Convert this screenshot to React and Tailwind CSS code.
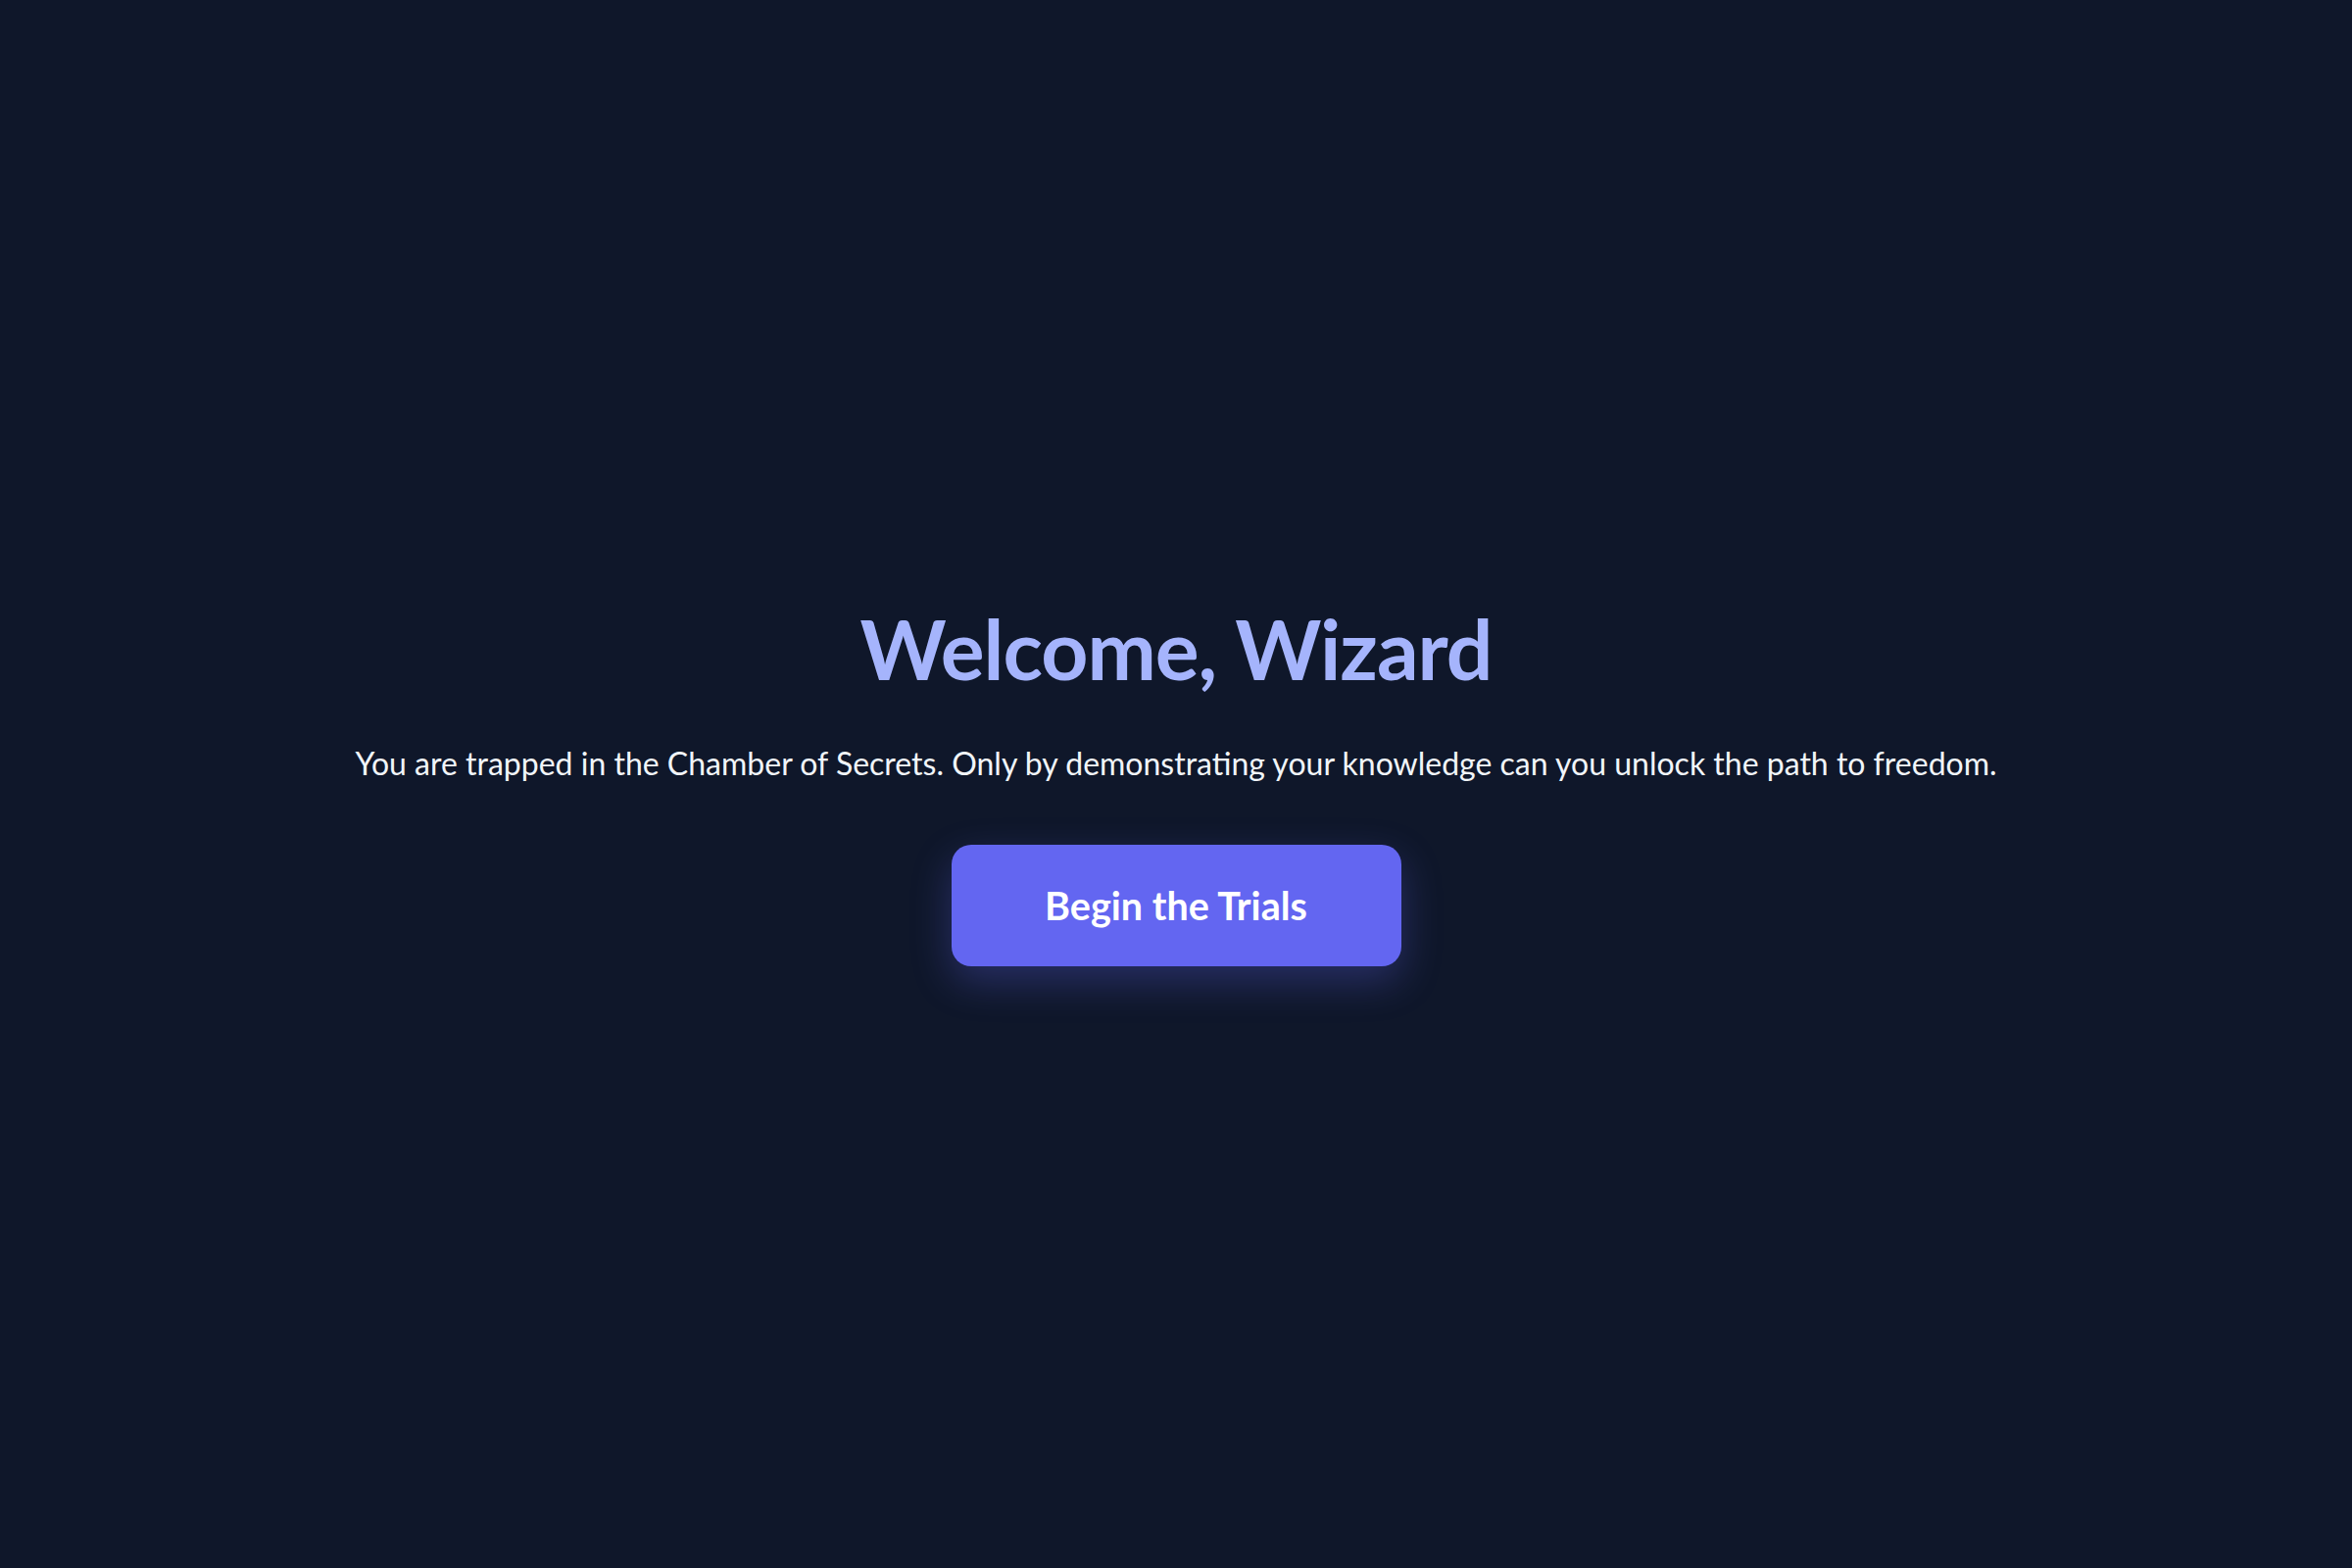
import React from 'react';

const App = () => {
  return (
    <div className="min-h-screen pt-[6px] bg-[#0f172a] flex flex-col items-center justify-center text-center font-['Lato',sans-serif]">
      <h1 className="text-[84px] leading-none font-bold text-[#a5b4fc] tracking-[-0.012em]">Welcome, Wizard</h1>
      <p className="mt-[52px] text-[32px] leading-[45px] text-[#f1f5f9]">
        You are trapped in the Chamber of Secrets. Only by demonstrating your knowledge can you unlock the path to freedom.
      </p>
      <button className="mt-[61px] w-[459px] h-[124px] rounded-[20px] bg-[#6366f1] text-white text-[39.5px] font-bold shadow-[0_15px_40px_rgba(99,102,241,0.3)]">
        Begin the Trials
      </button>
    </div>
  );
};

export default App;
